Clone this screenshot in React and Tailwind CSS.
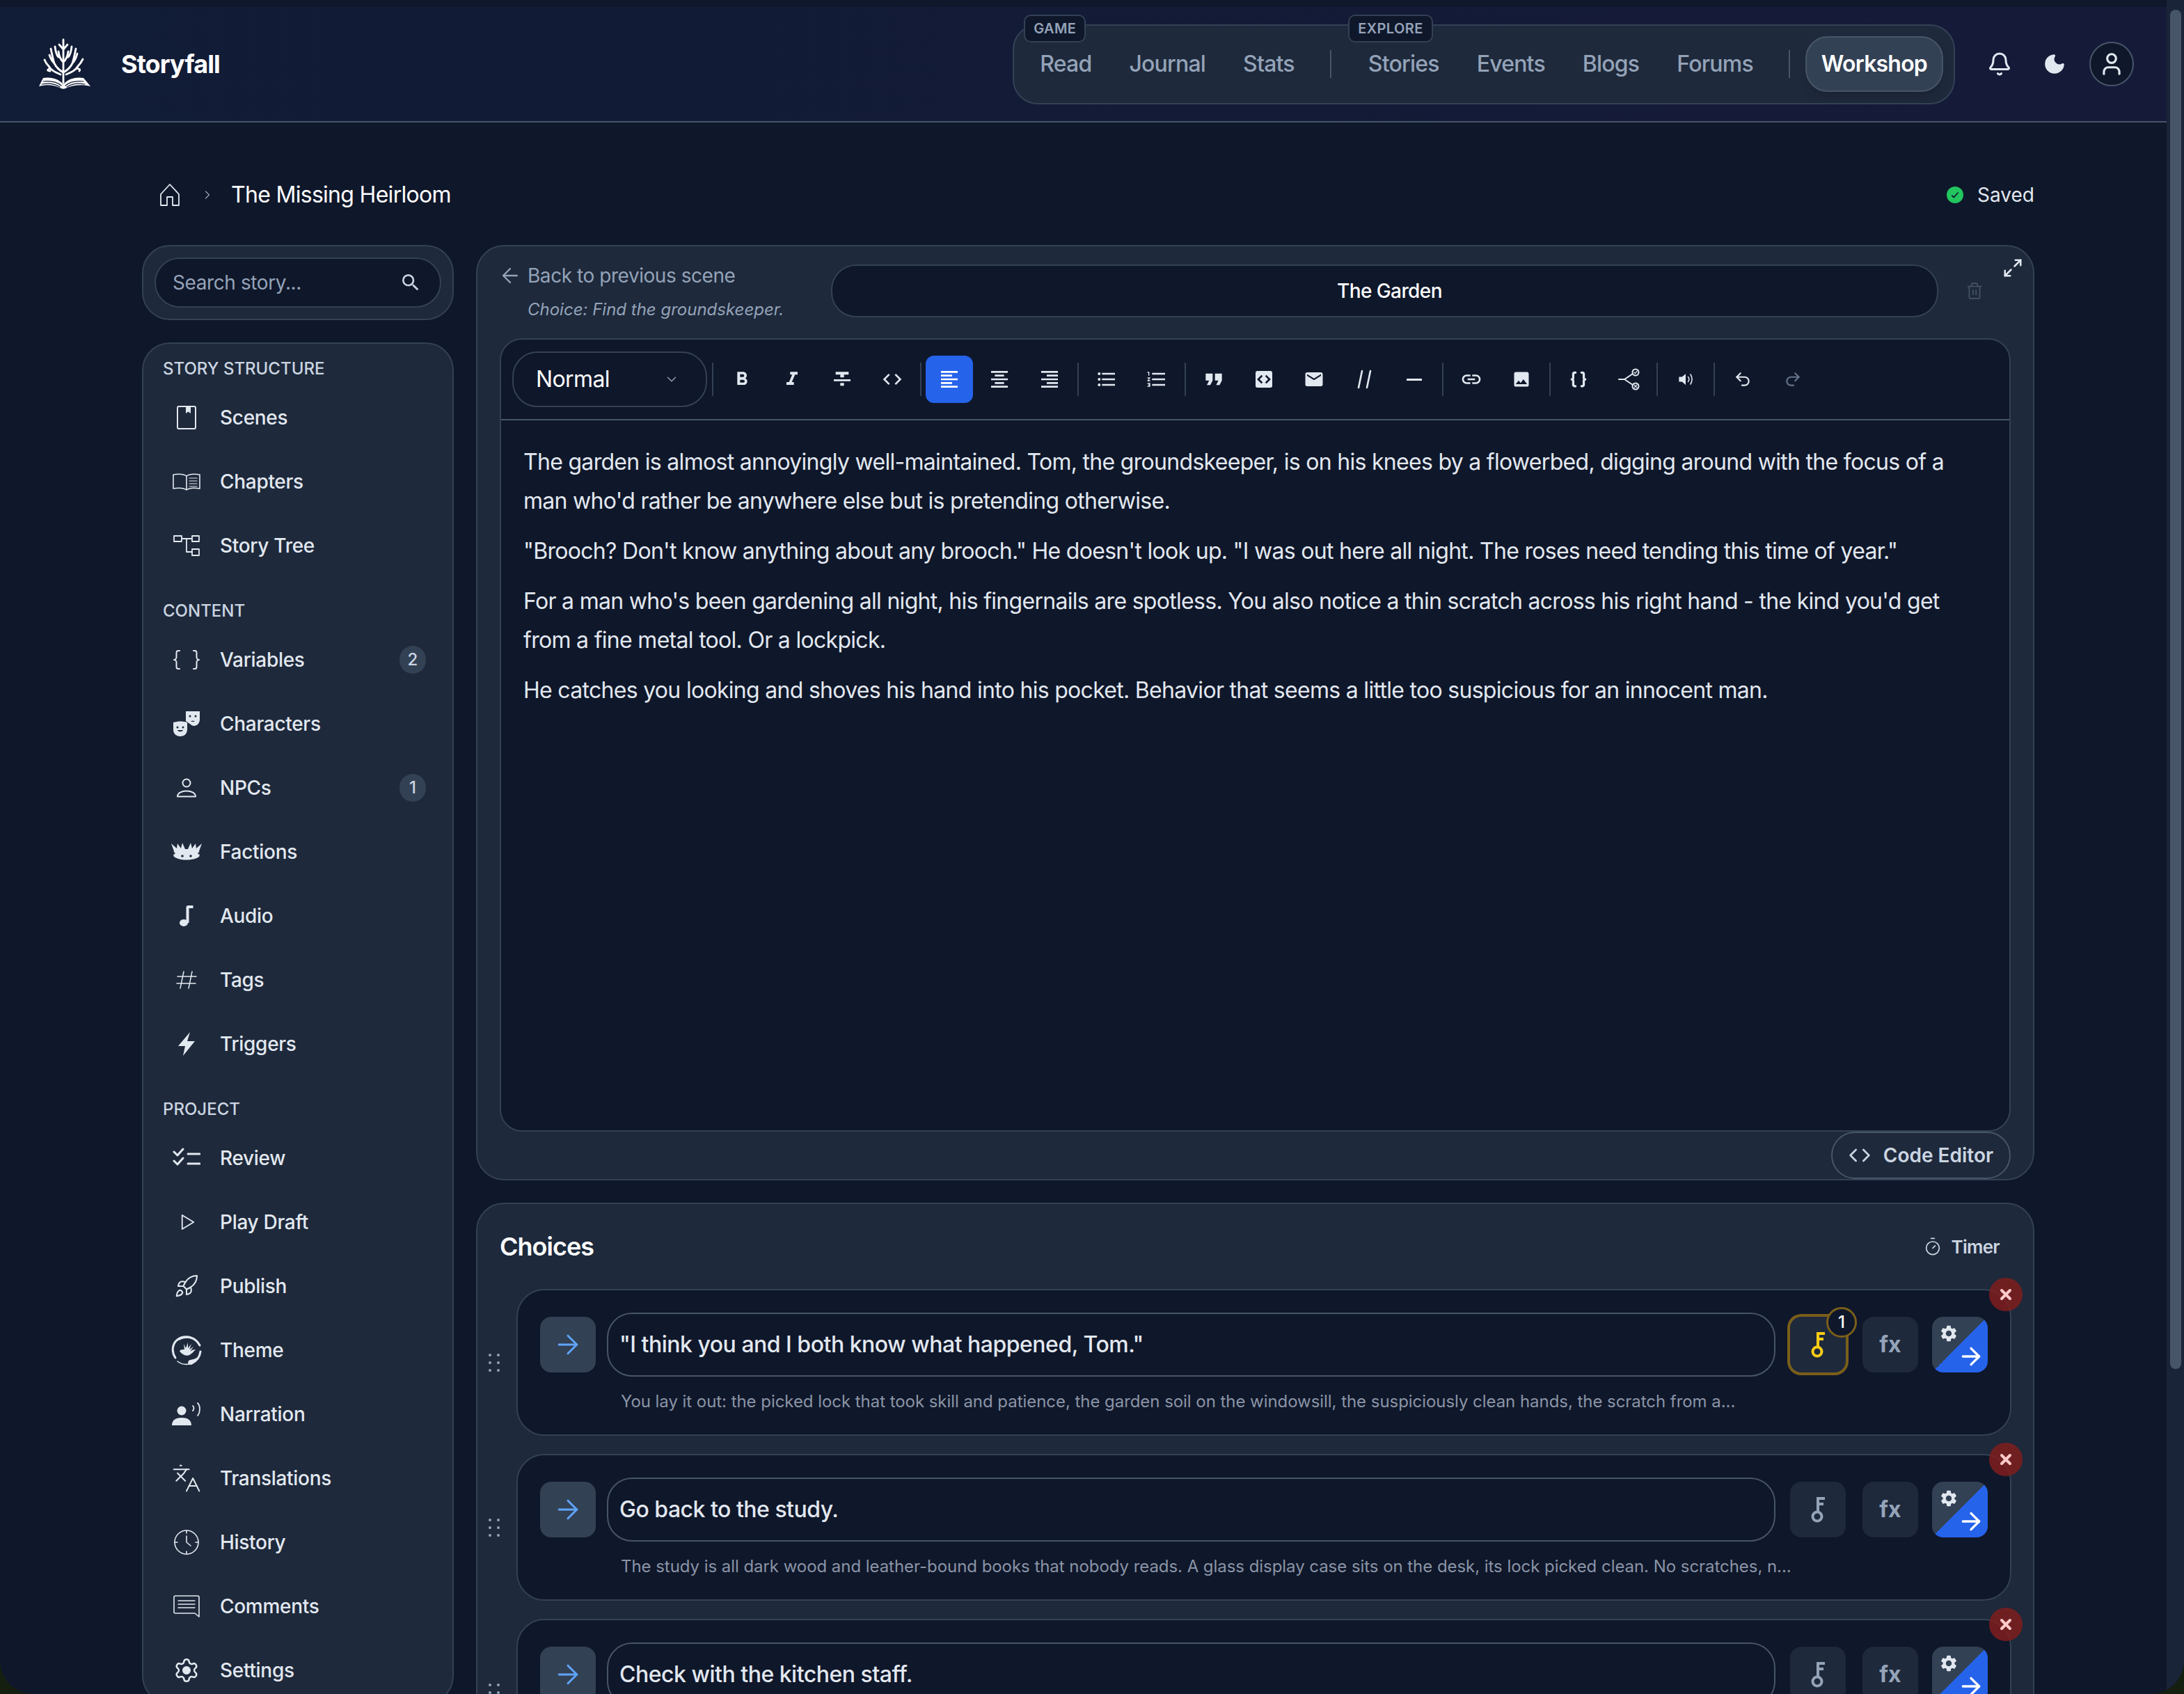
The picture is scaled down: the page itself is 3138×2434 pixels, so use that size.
import {
  ArrowLeft, ArrowRight, Bell, Braces, ChevronDown, ChevronRight, Code, Languages, Maximize2, Moon, Redo2, Rocket, Settings, Trash2, Timer, Undo2, User, X,
} from "lucide-react";
import {
  MdCode, MdEmail, MdFormatAlignCenter, MdFormatAlignLeft, MdFormatAlignRight, MdFormatBold, MdFormatItalic,
  MdFormatListBulleted, MdFormatListNumbered, MdFormatQuote, MdFormatStrikethrough, MdImage, MdLink, MdSearch, MdSettings,
} from "react-icons/md";

function Logo() {
  return (
    <svg viewBox="18 14 74 74" className="h-[74px] w-[74px] text-white" fill="none" stroke="currentColor" strokeWidth="2.800" strokeLinecap="round">
      <path d="M53 78V16M53 30l-6-7M53 30l6-7" />
      <path d="M53 63C47 60 43 56 40 50C38 44 37 38 35 29M40 50C37 47 35 44 33 38" />
      <path d="M53 48C49 45 47 40 46 33M46 41C43 38 42 34 41 26" />
      <path d="M49 66C42 63 35 60 32 54C30 52 28 50 26 45M34 57C31 59 28 60 34 61" />
      <path d="M53 63C59 60 63 56 66 50C68 44 69 38 71 29M66 50C69 47 71 44 73 36" />
      <path d="M53 48C57 45 59 40 60 33M60 41C63 38 64 34 65 26" />
      <path d="M57 66C64 63 71 60 74 54C76 52 78 50 81 44M72 57C75 58 78 58 76 61" />
      <path stroke="none" fill="currentColor" d="M24 71C34 69 45 72 51 78C52 80 54 80 55 78C61 72 72 69 82 71L92 83C80 80 66 81 56 86C54 87 52 87 50 86C40 81 30 80 18 83Z" />
      <path stroke="#111c36" strokeWidth="1.200" d="M24 76C34 75 44 77 50 82M82 76C72 75 62 77 56 82M22 80C32 78 42 80 48 84M84 80C74 78 64 80 58 84" />
    </svg>
  );
}

const Svg = ({ vb, w, h, fill = "none", sw = 2, children }) => (
  <svg viewBox={vb} width={w} height={h} fill={fill} stroke={fill === "none" ? "currentColor" : "none"} strokeWidth={sw} strokeLinecap="round" strokeLinejoin="round">
    {children}
  </svg>
);

const navIcons = {
  scenes: (
    <Svg vb="0 0 28 34" w={28} h={34}>
      <rect x="1" y="1" width="26" height="32" rx="2" />
      <path d="M13 1h7v10l-3.500-2.500L13 11z" fill="currentColor" stroke="none" />
    </Svg>
  ),
  chapters: (
    <Svg vb="0 0 40 26" w={40} h={26} sw={1.6}>
      <path d="M20 5C15 1 7 2 1 3v20c6-1 14-2 19 2c5-4 13-3 19-2V3c-6-1-14-2-19 2zM20 5v20" />
      <path d="M24 8h11M24 12h11M24 16h11M24 20h11" strokeWidth="1.200" />
    </Svg>
  ),
  tree: (
    <Svg vb="0 0 38 32" w={38} h={32} sw={1.8}>
      <rect x="1" y="2" width="11" height="8" />
      <rect x="27" y="2" width="10" height="8" />
      <rect x="27" y="21" width="10" height="9" />
      <path d="M12 6h15M19 6v19h8" />
    </Svg>
  ),
  braces: (
    <Svg vb="0 0 38 30" w={38} h={30}>
      <path d="M9 2H7C5 2 4.500 3.500 4.500 5v6C4.500 13 3 15 1 15c2 0 3.500 2 3.500 4v6c0 1.500.5 3 2.500 3h2" />
      <path d="M29 2h2c2 0 2.500 1.500 2.500 3v6c0 2 1.500 4 3.500 4c-2 0-3.500 2-3.500 4v6c0 1.500-.5 3-2.500 3h-2" />
    </Svg>
  ),
  masks: (
    <svg viewBox="14 10 48 40" width="48" height="40">
      <path fill="#e2e8f0" d="M37 12h20v12c0 5-4 9-8 9c-2 0-4-1-5-2l-7-5z" />
      <path fill="#e2e8f0" d="M19 28c7-2 13-2 20 0v10c0 6-4 10-10 10s-10-4-10-10z" />
      <g fill="#1e293b">
        <circle cx="43" cy="19" r="1.500" /><circle cx="51" cy="19" r="1.500" />
        <path d="M44 27c2-2 4-2 6 0z" />
        <circle cx="25" cy="35" r="1.500" /><circle cx="33" cy="35" r="1.500" />
        <path d="M25 39h8c-1 3-7 3-8 0z" />
      </g>
    </svg>
  ),
  npc: (
    <Svg vb="14 106 48 32" w={48} h={32} sw={2}>
      <circle cx="38" cy="115" r="5.500" />
      <path d="M25 134.500c0-5 6-8 13-8s13 3 13 8z" />
    </Svg>
  ),
  crown: (
    <svg viewBox="14 200 48 30" width="48" height="30">
      <path fill="#e2e8f0" d="M16 203L24 210L25 203L30 210L32 202L36 211L40 211L44 202L46 210L51 203L52 210L60 203L56 214C57 218 57 220 56 222C48 228 28 228 20 222C19 220 19 218 20 214Z" />
      <g fill="#1e293b">
        <circle cx="20" cy="217" r="1.600" /><circle cx="32" cy="221" r="1.800" /><circle cx="44" cy="221" r="1.800" /><circle cx="56" cy="217" r="1.600" />
      </g>
    </svg>
  ),
  note: (
    <Svg vb="0 0 20 32" w={20} h={32} fill="#e2e8f0">
      <ellipse cx="6" cy="26" rx="6" ry="5" />
      <path d="M9.500 26V4c0-2 1-3 3-3h7v4h-6v21z" />
    </Svg>
  ),
  hash: (
    <Svg vb="0 0 30 28" w={30} h={28} sw={1.5}>
      <path d="M11 2L6 26M23 2l-5 24M2 9h27M1 19h27" />
    </Svg>
  ),
  bolt: (
    <Svg vb="0 0 24 36" w={24} h={36} fill="#e2e8f0">
      <path d="M17 1L0 21H10L7 35L24 14H13Z" />
    </Svg>
  ),
  review: (
    <Svg vb="0 0 40 30" w={40} h={30} sw={3}>
      <path d="M2 6l5 5L15 2M2 19l5 5L15 15" />
      <path d="M22 9h17M22 23h17" />
    </Svg>
  ),
  play: (
    <span className="ml-[4px]">
      <Svg vb="0 0 24 26" w={22} h={24} sw={2}>
        <path d="M3 2l18 11L3 24z" />
      </Svg>
    </span>
  ),
  theme: (
    <svg viewBox="0 0 44 44" width="44" height="44">
      <path fill="none" stroke="#e2e8f0" strokeWidth="3" strokeLinecap="round" d="M6 33C-1 22 2 9 14 4C24 1 35 4 41 15M42 24C41 32 36 38 29 41" />
      <path fill="none" stroke="#e2e8f0" strokeWidth="1.500" strokeLinecap="round" d="M9 38C14 42 20 43 26 42M12 7C18 3 28 3 34 7" />
      <path fill="#e2e8f0" d="M26 43c-3-2-2-6 1-7c4-1 8-1 10-4c-1 6-5 11-11 11z" />
      <path fill="#e2e8f0" d="M12 23c3 5 9 8 14 6c4-2 6-5 9-8c-3 0-6 1-8 3l5-7l-6 4l3-8l-5 6l0-8l-3 8l-3-6l1 8c-3 0-5 0-7 2z" />
    </svg>
  ),
  narration: (
    <svg viewBox="0 0 44 34" width="44" height="34">
      <circle cx="15" cy="12" r="6.500" fill="#e2e8f0" />
      <path fill="#e2e8f0" d="M1 33c0-8 6-11 14-11s14 3 14 11z" />
      <path fill="none" stroke="#e2e8f0" strokeWidth="1.800" strokeLinecap="round" d="M31 5c2 1.500 2 5 0 7M38 1c4 4 4 13 0 18" />
    </svg>
  ),
  history: (
    <Svg vb="0 0 38 38" w={38} h={38} sw={1.600}>
      <circle cx="19" cy="19" r="17" />
      <path d="M19 2v4M19 32v4M2 19h4M32 19h4M19 10v9l6 5" />
    </Svg>
  ),
  comments: (
    <Svg vb="0 0 38 34" w={38} h={34} sw={1.600}>
      <path d="M3 2h32a2 2 0 0 1 2 2v28l-6-5H3a2 2 0 0 1-2-2V4a2 2 0 0 1 2-2z" />
      <path d="M7 9h24M7 14h24M7 19h24" strokeWidth="1.300" />
    </Svg>
  ),
};

const sections = [
  { title: "Story Structure", items: [["Scenes", navIcons.scenes], ["Chapters", navIcons.chapters], ["Story Tree", navIcons.tree]] },
  {
    title: "Content",
    items: [
      ["Variables", navIcons.braces, 2], ["Characters", navIcons.masks], ["NPCs", navIcons.npc, 1], ["Factions", navIcons.crown],
      ["Audio", navIcons.note], ["Tags", navIcons.hash], ["Triggers", navIcons.bolt],
    ],
  },
  {
    title: "Project",
    items: [
      ["Review", navIcons.review], ["Play Draft", navIcons.play], ["Publish", <Rocket key="r" size={36} strokeWidth={1.4} />], ["Theme", navIcons.theme],
      ["Narration", navIcons.narration], ["Translations", <Languages key="l" size={44} strokeWidth={1.1} />], ["History", navIcons.history],
      ["Comments", navIcons.comments], ["Settings", <Settings key="s" size={38} strokeWidth={1.6}><circle cx="12" cy="12" r="2.500" fill="currentColor" /></Settings>],
    ],
  },
];

function Header() {
  const link = "flex h-[80px] items-center px-[27px] text-[32px] font-medium tracking-[-0.8px] text-[#94a3b8]";
  const tag = "absolute -top-[16px] rounded-[10px] border-2 border-[#334155] bg-[#0f172a] px-[12px] py-[5px] text-[20px] font-semibold leading-[26px] tracking-[0.4px] text-[#94a3b8]";
  return (
    <header className="flex h-[166px] items-center justify-between border-b-2 border-[#475569] bg-gradient-to-r from-[#111c36] to-[#151a38] pl-[56px] pr-[47px]">
      <div className="flex items-center gap-[44px]">
        <Logo />
        <span className="text-[36px] font-bold tracking-tight text-white">Storyfall</span>
      </div>
      <div className="flex items-center">
        <nav className="relative flex h-[115px] items-center rounded-[36px] border-2 border-[#334155] bg-[#1e293b] pl-[10px] pr-[15px]">
          <span className={`${tag} left-[14px]`}>GAME</span>
          <span className={`${tag} left-[480px]`}>EXPLORE</span>
          <a className={link}>Read</a>
          <a className={link}>Journal</a>
          <a className={link}>Stats</a>
          <div className="ml-[24px] mr-[26px] h-[40px] w-[2px] bg-[#475569]" />
          <a className={link}>Stories</a>
          <a className={link}>Events</a>
          <a className={link}>Blogs</a>
          <a className={link}>Forums</a>
          <div className="ml-[24px] mr-[22px] h-[40px] w-[2px] bg-[#475569]" />
          <a className="flex h-[80px] items-center rounded-[32px] border-2 border-[#475569] bg-[#334155] px-[21px] text-[32px] font-semibold tracking-[-0.8px] text-white shadow-lg">Workshop</a>
        </nav>
        <Bell size={36} strokeWidth={2} className="ml-[46px] text-[#e2e8f0]" />
        <Moon size={34} fill="currentColor" strokeWidth={1.5} className="ml-[44px] text-[#e2e8f0]" />
        <div className="ml-[33px] flex h-[64px] w-[64px] items-center justify-center rounded-full border-2 border-[#475569] bg-[#0f172a]">
          <User size={38} strokeWidth={2} className="text-[#e2e8f0]" />
        </div>
      </div>
    </header>
  );
}

function Sidebar() {
  return (
    <aside className="flex w-[448px] shrink-0 flex-col gap-[32px]">
      <div className="rounded-[40px] border-2 border-[#334155] bg-[#1e293b] p-[16px]">
        <div className="flex h-[72px] items-center justify-between rounded-full border-2 border-[#334155] bg-[#0f172a] pl-[24px] pr-[26px]">
          <span className="text-[28px] tracking-[-0.4px] text-[#94a3b8]">Search story...</span>
          <MdSearch size={32} className="text-[#cbd5e1]" />
        </div>
      </div>
      <div className="rounded-[40px] border-2 border-[#334155] bg-[#1e293b] pt-[20px]">
        {sections.map((s, i) => (
          <div key={s.title} className={i ? "mt-[32px]" : ""}>
            <div className="mb-[8px] pl-[28px] text-[24px] font-medium uppercase leading-[32px] text-[#cbd5e1]">{s.title}</div>
            {s.items.map(([label, icon, badge]) => (
              <div key={label} className="flex h-[92px] items-center px-[38px]">
                <div className="flex w-[48px] justify-center text-[#e2e8f0]">{icon}</div>
                <span className="ml-[24px] text-[28px] font-medium tracking-[-0.3px] text-[#e2e8f0]">{label}</span>
                {badge && <span className="ml-auto flex h-[40px] w-[38px] items-center justify-center rounded-full bg-[#334155] text-[24px] font-medium text-[#cbd5e1]">{badge}</span>}
              </div>
            ))}
          </div>
        ))}
      </div>
    </aside>
  );
}

const CodeBlockIcon = () => (
  <svg viewBox="0 0 24 24" width="32" height="32">
    <rect x="3" y="3" width="18" height="18" rx="2" fill="#e2e8f0" />
    <path d="M10 8l-4 4l4 4M14 8l4 4l-4 4" fill="none" stroke="#0f172a" strokeWidth="2" />
  </svg>
);

const CommentIcon = () => (
  <svg viewBox="0 0 32 30" width="32" height="30" fill="none" stroke="#e2e8f0" strokeWidth="2.600" strokeLinecap="round">
    <path d="M13 3L8 27M25 3L20 27" />
  </svg>
);

const BranchIcon = () => (
  <svg viewBox="0 0 32 32" width="32" height="32" fill="none" stroke="#e2e8f0" strokeWidth="2" strokeLinecap="round">
    <path d="M2 16h8l12-8M10 16l12 8" />
    <circle cx="26" cy="6" r="4.500" />
    <circle cx="26" cy="26" r="4.500" />
    <path d="M24 6l1.500 1.500L28 4.500M24 24l4 4M28 24l-4 4" strokeWidth="1.200" />
  </svg>
);

const SpeakerIcon = () => (
  <svg viewBox="0 0 32 32" width="28" height="28" fill="none" stroke="#e2e8f0" strokeWidth="1.800" strokeLinecap="round">
    <path d="M5 12h5l6-5v18l-6-5H5z" fill="#e2e8f0" stroke="none" />
    <path d="M20 12c2 2 2 6 0 8M24 8c3 5 3 11 0 16" />
  </svg>
);

const tools = [
  [<MdFormatBold key="b" />],
  [<MdFormatItalic key="i" />],
  [<MdFormatStrikethrough key="s" />],
  [<MdCode key="c" />],
  "sep",
  [<MdFormatAlignLeft key="al" />, true],
  [<MdFormatAlignCenter key="ac" />],
  [<MdFormatAlignRight key="ar" />],
  "sep",
  [<MdFormatListBulleted key="ul" />],
  [<MdFormatListNumbered key="ol" />],
  "sep",
  [<MdFormatQuote key="q" size={40} />],
  [<CodeBlockIcon key="cb" />],
  [<MdEmail key="m" size={30} />],
  [<CommentIcon key="sl" />],
  [<span key="hr" className="h-[3px] w-[22px] bg-[#e2e8f0]" />],
  "sep",
  [<MdLink key="ln" />],
  [<MdImage key="im" size={28} />],
  "sep",
  [<Braces key="d" size={26} strokeWidth={3} />],
  [<BranchIcon key="br" />],
  "sep",
  [<SpeakerIcon key="sp" />],
  "sep",
  [<Undo2 key="u" size={26} strokeWidth={2} />],
  [<Redo2 key="r" size={26} strokeWidth={2} className="text-[#64748b]" />],
];

function Toolbar() {
  return (
    <div className="flex h-[116px] items-center gap-[4px] border-b-2 border-[#475569] pl-[16px]">
      <div className="flex h-[80px] w-[280px] items-center justify-between rounded-[36px] border-2 border-[#334155] pl-[32px] pr-[38px] text-[32px] tracking-[-0.6px] text-white">
        Normal
        <ChevronDown size={22} strokeWidth={1.5} className="text-[#94a3b8]" />
      </div>
      <div className="mx-[3px] h-[48px] w-[2px] bg-[#334155]" />
      {tools.map((t, i) =>
        t === "sep" ? (
          <div key={i} className="mx-[2px] h-[48px] w-[2px] bg-[#334155]" />
        ) : (
          <div key={i} className={`flex h-[68px] w-[68px] items-center justify-center rounded-[12px] text-[32px] text-[#e2e8f0] ${t[1] ? "bg-[#2563eb] text-white" : ""}`}>
            {t[0]}
          </div>
        ),
      )}
    </div>
  );
}

const KeyIcon = () => (
  <svg viewBox="0 0 22 38" width="22" height="38" fill="none" stroke="currentColor" strokeWidth="4">
    <circle cx="10" cy="29" r="6.500" />
    <path d="M11 22V3h10M11 11h8" />
  </svg>
);

function Choice({ text, sub, active }) {
  return (
    <div className="flex items-center">
      <svg viewBox="0 0 24 32" width="24" height="32" className="ml-[12px] mr-[20px] shrink-0 text-[#94a3b8]" fill="currentColor">
        <circle cx="6" cy="5" r="2" /><circle cx="18" cy="5" r="2" />
        <circle cx="6" cy="16" r="2" /><circle cx="18" cy="16" r="2" />
        <circle cx="6" cy="27" r="2" /><circle cx="18" cy="27" r="2" />
      </svg>
      <div className="relative h-[211px] flex-1 rounded-[40px] border-2 border-[#334155] bg-[#0f172a] px-[32px] pt-[32px]">
        <div className="flex items-center">
          <div className="flex h-[80px] w-[80px] shrink-0 items-center justify-center rounded-[16px] bg-[#334155] text-[#60a5fa]">
            <ArrowRight size={44} strokeWidth={1.6} />
          </div>
          <div className="ml-[16px] flex h-[92px] flex-1 items-center rounded-[36px] border-2 border-[#475569] pl-[16px] text-[32px] font-medium tracking-[-0.5px] text-[#e2e8f0]">{text}</div>
          <div className={`relative ml-[21px] flex h-[80px] w-[80px] shrink-0 items-center justify-center rounded-[16px] bg-[#1e293b] ${active ? "text-[#facc15] ring-4 ring-[#7a5f1a]" : "text-[#94a3b8]"}`}>
            <KeyIcon />
            {active && <span className="absolute -right-[16px] -top-[14px] flex h-[44px] w-[44px] items-center justify-center rounded-full border-[3px] border-[#7a5f1a] bg-[#0f172a] text-[24px] font-medium text-white">1</span>}
          </div>
          <div className="ml-[24px] flex h-[80px] w-[80px] shrink-0 items-center justify-center rounded-[16px] bg-[#1e293b] text-[32px] font-bold text-[#94a3b8]">fx</div>
          <div className="relative ml-[20px] h-[80px] w-[80px] shrink-0 rounded-[16px] bg-[linear-gradient(to_bottom_right,#334155_50%,#2563eb_50%)]">
            <MdSettings size={28} className="absolute left-[10px] top-[10px] text-[#e2e8f0]" />
            <ArrowRight size={40} strokeWidth={2} className="absolute bottom-[3px] right-[4px] text-white" />
          </div>
        </div>
        <div className="ml-[116px] mt-[20px] whitespace-nowrap text-[24px] leading-[32px] tracking-[-0.05px] text-[#8a94a6]">{sub}</div>
        <span className="absolute -right-[18px] -top-[18px] flex h-[48px] w-[48px] items-center justify-center rounded-full bg-[#7f1d1d]/85 text-[#fecaca]">
          <X size={24} strokeWidth={4} />
        </span>
      </div>
    </div>
  );
}

function Editor() {
  return (
    <section className="relative rounded-[40px] border-2 border-[#334155] bg-[#1e293b] px-[32px] pt-[26px]">
      <Maximize2 size={30} strokeWidth={2} className="absolute right-[14px] top-[16px] text-[#e2e8f0]" />
      <div className="flex h-[76px] items-start">
        <div className="w-[476px] shrink-0">
          <div className="-ml-[2px] flex h-[32px] items-center gap-[8px] text-[28px] tracking-[-0.45px] text-[#94a3b8]">
            <ArrowLeft size={34} strokeWidth={1.6} />
            Back to previous scene
          </div>
          <div className="ml-[40px] mt-[16px] text-[24px] italic leading-[34px] text-[#94a3b8]">Choice: Find the groundskeeper.</div>
        </div>
        <div className="flex h-[76px] flex-1 items-center justify-center rounded-[36px] border-2 border-[#334155] bg-[#0f172a] pl-[14px] text-[28px] font-medium tracking-[-0.6px] text-white">The Garden</div>
        <div className="flex h-[76px] w-[104px] shrink-0 items-center justify-center text-[#475569]">
          <Trash2 size={26} strokeWidth={1.5} />
        </div>
      </div>
      <div className="mt-[30px] h-[1140px] rounded-[32px] border-2 border-[#334155] bg-[#0f172a]">
        <Toolbar />
        <div className="flex flex-col gap-[16px] px-[32px] pt-[32px] text-[32px] leading-[56px] tracking-[-0.7px] text-[#e2e8f0]">
          <p>The garden is almost annoyingly well-maintained. Tom, the groundskeeper, is on his knees by a flowerbed, digging around with the focus of a man who'd rather be anywhere else but is pretending otherwise.</p>
          <p>"Brooch? Don't know anything about any brooch." He doesn't look up. "I was out here all night. The roses need tending this time of year."</p>
          <p>For a man who's been gardening all night, his fingernails are spotless. You also notice a thin scratch across his right hand - the kind you'd get from a fine metal tool. Or a lockpick.</p>
          <p>He catches you looking and shoves his hand into his pocket. Behavior that seems a little too suspicious for an innocent man.</p>
        </div>
      </div>
      <div className="flex justify-end">
        <div className="flex h-[68px] w-[258px] items-center justify-center gap-[18px] rounded-[34px] border-2 border-[#475569] text-[28px] font-semibold text-[#cbd5e1]">
          <Code size={32} strokeWidth={2} />
          Code Editor
        </div>
      </div>
    </section>
  );
}

function Choices() {
  return (
    <section className="rounded-[40px] border-2 border-[#334155] bg-[#1e293b] pb-[40px] pr-[31px]">
      <div className="flex h-[122px] items-center justify-between pl-[32px] pr-[17px]">
        <h2 className="text-[36px] font-semibold tracking-[-1px] text-white">Choices</h2>
        <div className="flex items-center gap-[12px] text-[26px] font-semibold tracking-[-0.7px] text-[#cbd5e1]">
          <Timer size={28} strokeWidth={1.5} />
          Timer
        </div>
      </div>
      <div className="flex flex-col gap-[26px]">
        <Choice active text={'"I think you and I both know what happened, Tom."'} sub="You lay it out: the picked lock that took skill and patience, the garden soil on the windowsill, the suspiciously clean hands, the scratch from a..." />
        <Choice text="Go back to the study." sub="The study is all dark wood and leather-bound books that nobody reads. A glass display case sits on the desk, its lock picked clean. No scratches, n..." />
        <Choice text="Check with the kitchen staff." sub="" />
      </div>
    </section>
  );
}

export default function App() {
  return (
    <div className="h-[2434px] w-[3138px] overflow-hidden bg-[#141f10] font-[Inter,sans-serif]">
      <div className="flex h-full overflow-hidden rounded-b-[48px] bg-[#0f172a]">
        <div className="w-[3113px] shrink-0">
          <div className="h-[10px]" />
          <Header />
          <main className="pl-[204px] pr-[190px]">
            <div className="flex h-[176px] items-center justify-between pl-[26px] pt-[32px]">
              <div className="flex items-center">
                <svg viewBox="0 0 28 32" width="28" height="32" fill="none" stroke="#e2e8f0" strokeWidth="1.800" strokeLinejoin="round">
                  <path d="M1 15L14 1L27 15V31H18V19H10V31H1Z" />
                </svg>
                <ChevronRight size={20} strokeWidth={1.5} className="ml-[30px] text-[#94a3b8]" />
                <span className="ml-[24px] text-[32px] tracking-[-0.7px] text-white">The Missing Heirloom</span>
              </div>
              <div className="flex items-center gap-[20px] text-[28px] text-[#e2e8f0]">
                <span className="flex h-[24px] w-[24px] items-center justify-center rounded-full bg-[#22c55e]">
                  <svg viewBox="0 0 24 24" width="14" height="14" fill="none" stroke="#0f172a" strokeWidth="3"><path d="M4 13l5 5L20 6" /></svg>
                </span>
                Saved
              </div>
            </div>
            <div className="flex gap-[32px]">
              <Sidebar />
              <div className="flex min-w-0 flex-1 flex-col gap-[32px]">
                <Editor />
                <Choices />
              </div>
            </div>
          </main>
        </div>
        <div className="h-full flex-1 bg-[#1a2438] pl-[5px] pr-[4px] pt-[14px]">
          <div className="h-[1953px] rounded-[8px] bg-[#475569]" />
        </div>
      </div>
    </div>
  );
}
